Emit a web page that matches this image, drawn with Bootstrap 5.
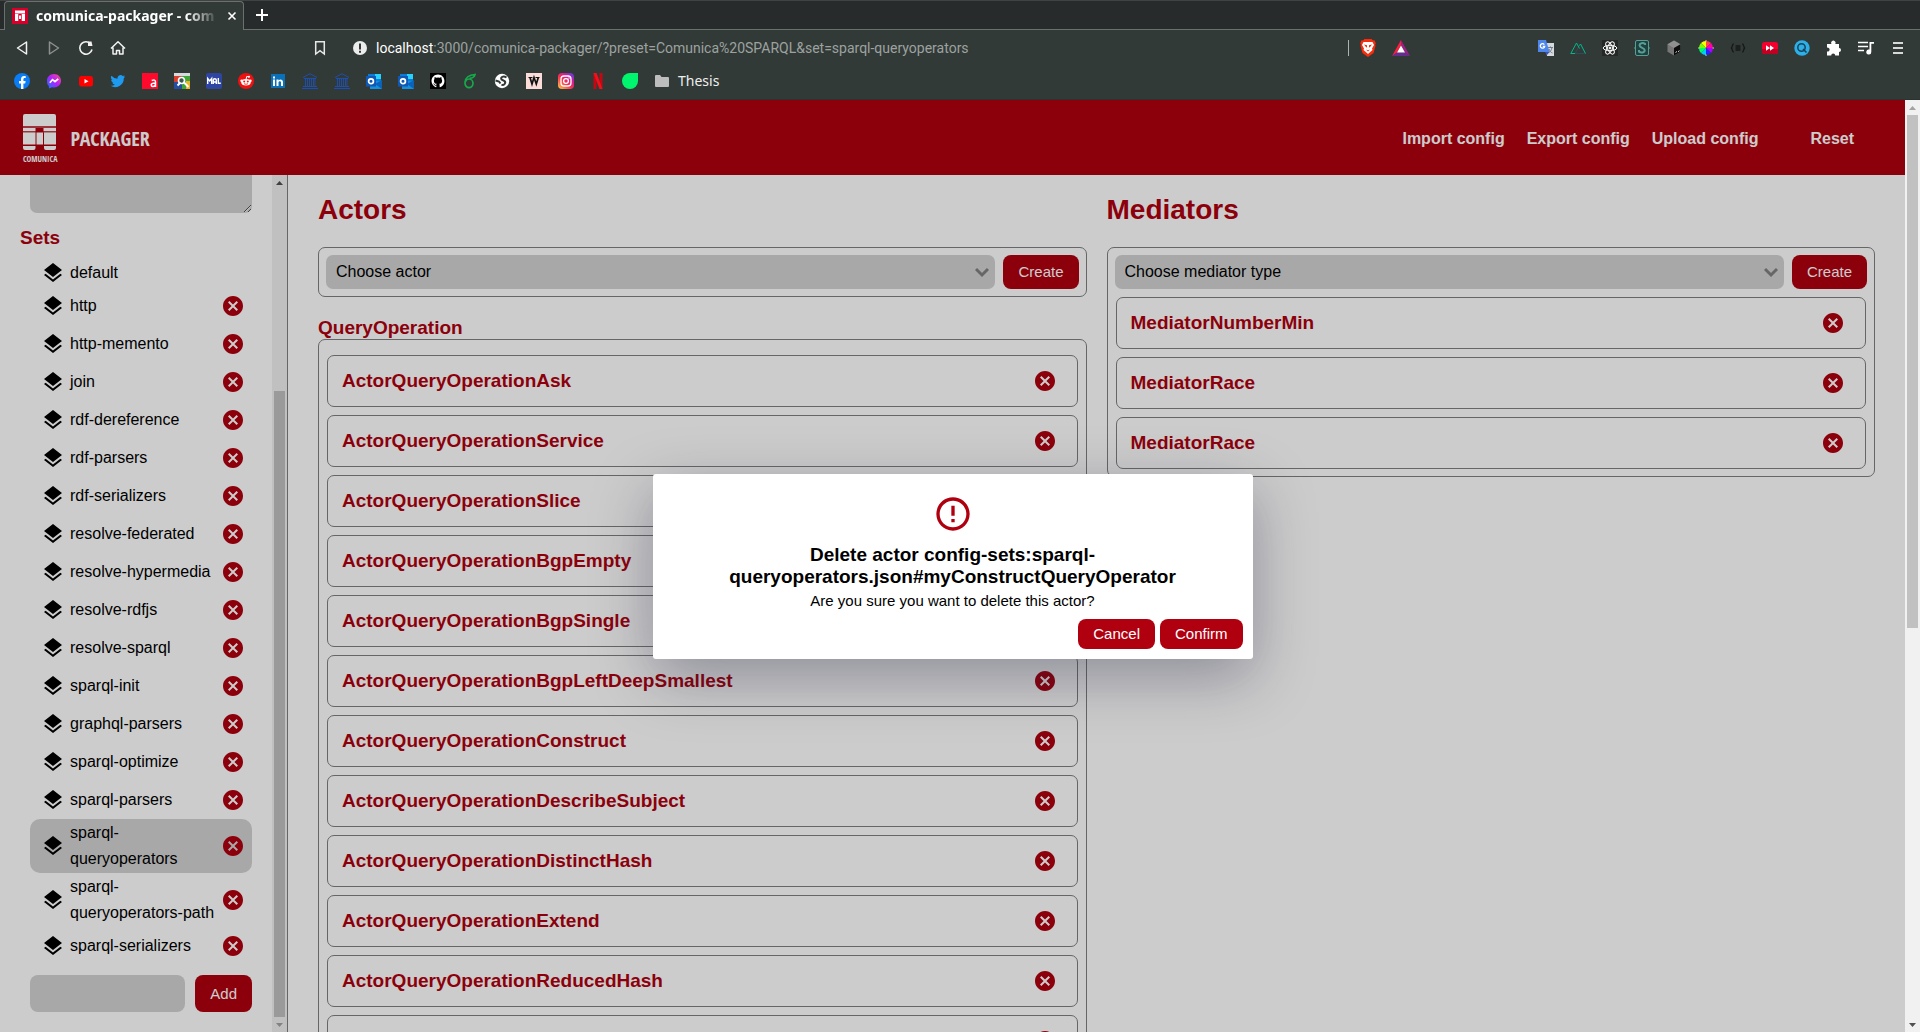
<!DOCTYPE html>
<html lang="en">
<head>
<meta charset="utf-8">
<meta name="viewport" content="width=device-width, initial-scale=1">
<title>comunica-packager - comunica</title>
<link rel="stylesheet" href="https://cdn.jsdelivr.net/npm/bootstrap@5.3.0/dist/css/bootstrap.min.css">
<style>
:root{--brand:#b0000f;--field:#d3d3d3;--line:#808080}
body{height:100vh;font-family:"Liberation Sans",Arial,sans-serif;font-size:16px;line-height:24px;color:#000;background:#fff;overflow:hidden}
svg{display:block;flex:none}
/* browser frame */
.chrome-bar{flex:none;background:#323a37;color:#eee;font-family:"Noto Sans",sans-serif;font-size:14px}
.tab-strip{height:30px;background:#272b2b;border-top:1px solid #3f4443;border-bottom:1px solid #6b6f6e;padding-left:4px}
.tab-open{width:240px;height:29px;background:#323a37;border:1px solid #6b6f6e;border-bottom:0;border-radius:4px 4px 0 0;padding:0 6px 0 7px;gap:8px;margin-bottom:-1px}
.tab-name{font-weight:700;font-size:14px;color:#fff;flex:1;white-space:nowrap;line-height:20px;-webkit-mask-image:linear-gradient(90deg,#000 82%,transparent);mask-image:linear-gradient(90deg,#000 82%,transparent)}
.plain-btn{border:0;background:none;padding:0;color:inherit;display:block;line-height:0}
.tool-row{height:36px;padding:0 14px;gap:16px}
.save-page{margin-left:170px}
.shield-group{height:16px;border-left:1px solid #aeb2b0;padding-left:11px}
.url-box{font-family:Roboto,sans-serif;font-size:14px;color:#9da2a0;line-height:20px}
.url-box b{font-weight:400;color:#fff}
.mark-row{height:34px;padding:0 14px 4px;gap:16px;border-bottom:1px solid #2b3230}
.mark-row a,.mark-row a:hover{color:#eee;text-decoration:none}
/* application */
.app-head{flex:none;height:75px;background:var(--brand);padding:2px 51px 0 23px;gap:22px}
.app-head a{color:#fff;font-weight:700;text-decoration:none}
.app-head .reset-link{padding-left:30px}
.brand-pair{gap:13px}
.brand-word{font-family:"Open Sans Condensed","Roboto Condensed",sans-serif;font-size:20px;line-height:24px;font-weight:700;color:#fff}
.logo-word{font-family:"Open Sans Condensed","Roboto Condensed",sans-serif;font-size:8px;line-height:10px;color:#fff;text-align:center}
.side-col{width:288px;border-right:1px solid var(--line)}
.side-body{padding:0 20px 20px 30px}
.brand-text{color:var(--brand);font-weight:700;font-size:19px;line-height:22px;margin:0}
.side-body .brand-text{margin:14px 0 10px -10px}
.group-name{margin-top:20px}
.notes-box{height:38px;border:0;border-radius:0 0 7px 7px;background:var(--field);width:100%;display:block;resize:vertical}
.set-item{min-height:38px;padding:1px 7px 1px 11px;gap:5px;border-radius:10px;line-height:26px}
.set-item.first-set{min-height:28px}
.set-item.chosen{background:var(--field)}
.set-item span{flex:1;min-width:0}
.kill{color:var(--brand);border:0;background:none;padding:0;line-height:0}
.add-form{gap:10px;margin-top:10px}
.new-set{height:37px;min-width:0;flex:1;border:0;border-radius:8px;background:var(--field)}
.red-btn{background:var(--brand);color:#fff;border:0;border-radius:8px;padding:0 15px;font-size:15px;line-height:18px;height:34px}
.red-btn:hover{background:#8f000c;color:#fff}
.scroll-rail{width:15px;background:#f1f1f1;flex:none}
.scroll-rail i{display:block;background:#c1c1c1;width:11px}
.side-thumb{height:73%}
.page-thumb{height:55%}
.rail-arrow{height:15px;display:flex;align-items:center;justify-content:center}
.work-area{padding:18px 30px 0;gap:20px}
.work-area h2{color:var(--brand);font-weight:700;font-size:28px;line-height:34px;margin:0 0 20px}
.frame-box{border:1px solid var(--line);border-radius:7px;padding:7px}
.stack{display:flex;flex-direction:column;gap:8px}
.stack.roomy{padding-top:15px}
.pick{height:34px;border:0;border-radius:7px;padding:0 36px 0 10px;font-size:16px;line-height:24px;color:#000;background-color:var(--field);background-position:right 6px center;background-size:14px 14px;--bs-form-select-bg-img:url("data:image/svg+xml,%3csvg xmlns='http://www.w3.org/2000/svg' viewBox='0 0 14 14'%3e%3cpath fill='none' stroke='%23808080' stroke-width='3' d='M1 4l6 6 6-6'/%3e%3c/svg%3e")}
.part-card{height:52px;border:1px solid var(--line);border-radius:7px;padding:0 20px 0 14px;margin:0 1px}
.shade{position:absolute;inset:0;background:rgba(0,0,0,.2)}
.ask-box{width:600px;background:#fff;border-radius:3px;padding:20px 10px 10px;box-shadow:0 18px 60px rgba(30,30,60,.36)}
.ask-box h3{font-size:19px;line-height:22px;font-weight:700;margin:10px 0 4px}
.ask-box p{font-size:15px;line-height:18px;margin:0 0 9px}
.ask-box .red-btn{height:30px}
.answers{gap:5px}
</style>
</head>
<body class="d-flex flex-column">
<svg width="0" height="0" class="position-absolute" aria-hidden="true">
<symbol id="layers" viewBox="0 0 24 24"><path d="M11.99 18.54l-7.37-5.73L3 14.07l9 7 9-7-1.63-1.27zM12 16l7.36-5.73L21 9l-9-7-9 7 1.63 1.27z"/></symbol>
<symbol id="cancel" viewBox="0 0 24 24"><path fill="currentColor" d="M12 2C6.47 2 2 6.47 2 12s4.47 10 10 10 10-4.47 10-10S17.53 2 12 2zm5 13.59L15.59 17 12 13.41 8.41 17 7 15.59 10.59 12 7 8.41 8.41 7 12 10.59 15.59 7 17 8.41 13.41 12z"/></symbol>
<symbol id="bank" viewBox="0 0 16 16"><g fill="none" stroke="#1d4fb0"><path d="M1 4.5L8 .7l7 3.800M2 5.500h12M1 13.500h14M0 15.500h16"/><path d="M3.500 6v7M5.500 6v7M7.500 6v7M9.500 6v7M11.500 6v7M13 6v7" stroke-width=".9"/></g></symbol>
<symbol id="outlook" viewBox="0 0 16 16"><path fill="#0a7bd8" d="M2 1h13v8H2z"/><path fill="#28d2ff" d="M9 1h6v5H9z"/><path fill="#1490df" d="M4 8h12v8H4z"/><path fill="#0a63b8" d="M9 11l7-4v9z"/><path fill="#0f59b5" d="M0 3h10v10.500H0z"/><circle cx="5" cy="8.200" r="2.400" fill="none" stroke="#fff" stroke-width="1.700"/></symbol>
</svg>

<header class="chrome-bar">
<div class="tab-strip d-flex align-items-end">
<div class="tab-open d-flex align-items-center">
<svg width="16" height="16" viewBox="0 0 16 16"><path fill="#d6002a" d="M0 0h16v16H0z"/><path fill="#fff" d="M3 2.500h10v3H3zM3 6h3.300v7H3zM9.700 6H13v7H9.700zM7 7.500h2V11H7z"/></svg>
<span class="tab-name">comunica-packager - com</span>
<button class="plain-btn" aria-label="Close tab"><svg width="10" height="10" viewBox="0 0 10 10"><path d="M1.500 1.500l7 7m0-7l-7 7" stroke="#fff" stroke-width="1.600"/></svg></button>
</div>
<button class="plain-btn ms-2 mb-2 ps-1" aria-label="New tab"><svg width="12" height="12" viewBox="0 0 12 12"><path d="M6 0v12M0 6h12" stroke="#fff" stroke-width="2"/></svg></button>
</div>
<div class="tool-row d-flex align-items-center">
<button class="plain-btn" aria-label="Back"><svg width="16" height="16" viewBox="0 0 16 16" fill="none" stroke="#f2f2f2" stroke-width="1.500" stroke-linejoin="round"><path d="M12.500 2v12L3.500 8z"/></svg></button>
<button class="plain-btn" aria-label="Forward"><svg width="16" height="16" viewBox="0 0 16 16" fill="none" stroke="#8b908e" stroke-width="1.500" stroke-linejoin="round"><path d="M3.500 2v12l9-6z"/></svg></button>
<button class="plain-btn" aria-label="Reload"><svg width="16" height="16" viewBox="0 0 16 16"><path fill="none" stroke="#f2f2f2" stroke-width="1.600" d="M10.500 2.300A6.200 6.200 0 1 0 14 9.500"/><path fill="#f2f2f2" d="M10 1.500h3.500L14.500 6H10z"/></svg></button>
<button class="plain-btn" aria-label="Home"><svg width="16" height="16" viewBox="0 0 16 16" fill="none" stroke="#f2f2f2" stroke-width="1.500" stroke-linejoin="round"><path d="M1 8.500L8 1.700l7 6.800M3 7.500V14h3.500v-3.500h3V14H13V7.500"/></svg></button>
<button class="plain-btn save-page" aria-label="Bookmark this page"><svg width="16" height="16" viewBox="0 0 16 16" fill="none" stroke="#e8e8e8" stroke-width="1.500"><path d="M3.700 1.700h8.600v12.300L8 10.700 3.700 14z"/></svg></button>
<div class="d-flex align-items-center flex-grow-1 ms-2 gap-2">
<svg width="16" height="16" viewBox="0 0 16 16"><circle cx="8" cy="8" r="7" fill="#ececec"/><path fill="#323a37" d="M7 3.500h2v6H7zM7 10.700h2v2H7z"/></svg>
<span class="url-box"><b>localhost</b>:3000/comunica-packager/?preset=Comunica%20SPARQL&amp;set=sparql-queryoperators</span>
</div>
<div class="shield-group d-flex align-items-center gap-3 me-5">
<svg width="16" height="18" viewBox="0 0 16 18"><path fill="#fb2c0c" d="M4.500 0h7l1.500 1.500 1.500-.2 1.300 3-.6 1.200.3 1.500-2 7L8 18l-5.500-4-2-7 .3-1.500L.2 4.300l1.300-3 1.500.2z"/><path fill="#fff" d="M3.500 3h9l1.500 3-2 3.500.5 1.500L8 15l-4.500-4 .5-1.500L2 6z"/><path fill="#fb2c0c" d="M4 5.500l3 .8v2.500L5.500 7.500zM12 5.500l-3 .8v2.500l1.500-1.300zM6 10.500l2 .7 2-.7-2 2z"/></svg>
<svg width="18" height="16" viewBox="0 0 18 16"><path fill="#ff1c3c" d="M9 0L0 16l5-3.500L9 5z"/><path fill="#9e1f8a" d="M9 0l9 16-5-3.500L9 5z"/><path fill="#662d91" d="M0 16h18l-5-3.500H5z"/><path fill="#fff" d="M9 5.500l4 7H5z"/></svg>
</div>
<div class="d-flex align-items-center gap-3 ps-5 ms-3">
<svg width="16" height="16" viewBox="0 0 16 16"><path fill="#d6d9dd" d="M7 3h9v13H9z"/><path fill="#4f86ec" d="M0 0h8l3.500 12H0z"/><path fill="#3558b8" d="M7 12h4.500L9 15z"/><path fill="none" stroke="#fff" stroke-width="1.300" d="M6.300 4.600A2.200 2.200 0 1 0 6.700 6.300H4.800"/><path fill="none" stroke="#6b7c8c" d="M10 7.500h5M12.500 6.500v1M14 7.500c-.5 3-2 4-3 5M11 9c.5 2 2 3.500 3.500 4"/></svg>
<svg width="16" height="16" viewBox="0 0 16 16" fill="none"><path stroke="#2f495e" d="M5 13.500l5.500-9.500 5 9.500z"/><path stroke="#00b888" d="M5 13.500H.8L6.500 3l3 5.500M9.500 5.500l1-1.500 5 9.500"/></svg>
<svg width="16" height="16" viewBox="0 0 16 16" fill="none" stroke="#fff"><path stroke="none" fill="#252827" d="M0 0h16v16H0z"/><ellipse cx="8" cy="8" rx="6.800" ry="2.700"/><ellipse cx="8" cy="8" rx="6.800" ry="2.700" transform="rotate(60 8 8)"/><ellipse cx="8" cy="8" rx="6.800" ry="2.700" transform="rotate(120 8 8)"/><circle cx="8" cy="8" r="1" fill="#fff"/></svg>
<svg width="16" height="16" viewBox="0 0 16 16" fill="none" stroke="#5a9d94"><rect x="1.500" y=".5" width="13" height="15" rx="1.500" fill="#1c4340"/><path stroke-width="2" d="M11 5V3.800C9 2.500 5.500 3 5.500 5.300c0 3 5.200 2.200 5.200 5 0 2.500-3.700 2.700-5.700 1.400V10"/><path d="M0 8h1.500m13 0H16"/></svg>
<svg width="16" height="16" viewBox="0 0 16 16"><path fill="#777" d="M8 .5l6.500 3.700v7.600L8 15.500l-6.500-3.700V4.200z"/><path fill="#aaa" d="M8 .5l6.500 3.700L8 8 1.500 4.200z" opacity=".5"/><path fill="#0c0c0c" d="M8 8l6.500-3.800v7.600L8 15.500z"/><path stroke="#ddd" d="M9.500 12.500l1.500-1m1 .2l1.500-1"/></svg>
<svg width="16" height="16" viewBox="0 0 16 16"><path fill="#ff0" d="M8 8V1a7 7 0 0 0-5 2z"/><path fill="#f44" d="M8 8V1a7 7 0 0 1 5 2z"/><path fill="#f0a" d="M8 8l5-5a7 7 0 0 1 2 5z"/><path fill="#a0f" d="M8 8h7a7 7 0 0 1-2 5z"/><path fill="#22f" d="M8 8l5 5a7 7 0 0 1-5 2z"/><path fill="#0cf" d="M8 8v7a7 7 0 0 1-5-2z"/><path fill="#0f6" d="M8 8l-5 5a7 7 0 0 1-2-5z"/><path fill="#7f0" d="M8 8H1a7 7 0 0 1 2-5z"/><path stroke="#ccc" d="M8 0v1.500M8 14.500V16M0 8h1.500m13 0H16"/></svg>
<svg width="16" height="16" viewBox="0 0 16 16" fill="none" stroke="#151817" stroke-width="1.300"><path d="M3.800 4C1.500 4 3.200 7.500 1 8c2.200.5.500 4 2.800 4M12.200 4c2.300 0 .6 3.500 2.800 4-2.200.5-.5 4-2.800 4M5.500 6h5M5.500 8h5M5.500 10h5"/></svg>
<svg width="16" height="16" viewBox="0 0 16 16"><rect y="2" width="16" height="12" rx="2.500" fill="#f5002e"/><path fill="#c00022" d="M0 9h16v3a2 2 0 0 1-2 2H2a2 2 0 0 1-2-2z"/><path fill="#fff" d="M4 5.200L8 8l-4 2.800zM8 5.200L12 8l-4 2.800z"/></svg>
<svg width="16" height="16" viewBox="0 0 16 16"><circle cx="8" cy="8" r="7.700" fill="#2bb1e8"/><circle cx="7.500" cy="7.500" r="3.700" fill="none" stroke="#17415a" stroke-width="1.500"/><path stroke="#17415a" stroke-width="1.600" d="M9 9l3.500 3.500"/></svg>
<svg width="16" height="16" viewBox="0 0 16 16"><path fill="#fff" d="M1 4h4.500a2.200 2.200 0 1 1 3.700 0H13v4a2 2 0 1 1 0 4v3.500H9.200a2 2 0 1 0-4 0H1V11.500a2 2 0 1 0 0-3.800z"/></svg>
<svg width="16" height="16" viewBox="0 0 16 16"><path stroke="#fff" stroke-width="1.700" d="M0 2.500h10M0 6.500h10M0 10.500h6"/><path fill="#fff" d="M11.500 2H16v1.800h-2.700V12a2.500 2.500 0 1 1-1.800-2.400z"/></svg>
<svg width="16" height="16" viewBox="0 0 16 16"><path stroke="#d6d9d8" stroke-width="2" d="M3 3h10M3 8h10M3 13h10"/></svg>
</div>
</div>
<nav class="mark-row d-flex align-items-center" aria-label="Bookmarks">
<svg width="16" height="16" viewBox="0 0 16 16"><circle cx="8" cy="8" r="8" fill="#0a7cf5"/><path fill="#fff" d="M7 16v-5.500H5V8h2V6.300C7 4.200 8.200 3 10.200 3l1.500.1v2h-1C9.700 5.100 9.400 5.700 9.400 6.400V8h2.200l-.4 2.500H9.400V16z"/></svg>
<svg width="16" height="16" viewBox="0 0 16 16"><defs><linearGradient id="mg" x1="0" y1="1" x2="1" y2="0"><stop offset="0" stop-color="#0a7cff"/><stop offset=".5" stop-color="#b020ff"/><stop offset="1" stop-color="#ff4c80"/></linearGradient></defs><path fill="url(#mg)" d="M8 1c4 0 7 2.900 7 6.700s-3 6.700-7 6.700l-2-.2L3 15.500l-.2-2.400A6.600 6.600 0 0 1 1 7.700C1 3.900 4 1 8 1z"/><path fill="none" stroke="#fff" stroke-width="1.700" d="M3.800 9.700l2.700-3 2.500 2 3.200-2.800"/></svg>
<svg width="16" height="16" viewBox="0 0 16 16"><rect x="1" y="3" width="14" height="10.500" rx="2.500" fill="#f00"/><path fill="#fff" d="M6.500 6l4 2.200-4 2.300z"/></svg>
<svg width="16" height="16" viewBox="0 0 24 24"><path fill="#1d9bf0" d="M22.600 5.300a9 9 0 0 1-2.600.7 4.500 4.500 0 0 0 2-2.500c-.9.500-1.800.9-2.900 1.100a4.500 4.500 0 0 0-7.700 4.100A13 13 0 0 1 2.200 4.100a4.500 4.500 0 0 0 1.400 6.100 4.600 4.600 0 0 1-2-.6 4.500 4.500 0 0 0 3.600 4.500 4.600 4.600 0 0 1-2 .1 4.500 4.500 0 0 0 4.200 3.100A9 9 0 0 1 .9 19.200a13 13 0 0 0 19.800-11.400c.7-.7 1.500-1.500 1.900-2.500z"/></svg>
<svg width="16" height="16" viewBox="0 0 16 16"><path fill="#ff0a2d" d="M0 0h16v16H0z"/><path fill="none" stroke="#fff" stroke-width="1.500" d="M9.700 7.500q3.800-1.500 3.800 1.500v5M13.500 10q-4.300 0-4.300 2 0 1.500 1.600 1.500 2.700 0 2.700-2.500"/></svg>
<svg width="16" height="16" viewBox="0 0 16 16"><path fill="#d8402c" d="M0 3h8v6H0z"/><path fill="#3fa535" d="M8 3h8v13H8z"/><path fill="#244f9e" d="M0 9h8v7H0z"/><path fill="#d7dadd" d="M0 0h16v3H0z"/><path fill="#e9b52b" d="M12 8h4v8h-4z"/><circle cx="7.500" cy="7.500" r="3" fill="#3a5a50" stroke="#fff" stroke-width="1.600"/><path stroke="#fff" stroke-width="2" d="M9.500 9l5 5M3.500 12.500l3-3"/></svg>
<svg width="16" height="16" viewBox="0 0 16 16"><rect width="16" height="16" rx="2" fill="#2e45a3"/><path fill="none" stroke="#fff" stroke-width="1.400" d="M1.700 11V5.500l2 2.500 2-2.500V11M7.300 11V7q0-1.300 1.500-1.300T10.300 7v4M7.300 9h3M12.300 5v5.300h2.500"/></svg>
<svg width="16" height="16" viewBox="0 0 16 16"><circle cx="8" cy="8" r="8" fill="#f01010"/><ellipse cx="8" cy="9.300" rx="4.700" ry="3.300" fill="#fff"/><circle cx="3.600" cy="7.800" r="1.300" fill="#fff"/><circle cx="12.400" cy="7.800" r="1.300" fill="#fff"/><circle cx="11" cy="3.800" r="1" fill="#fff"/><path fill="none" stroke="#fff" d="M8 6.500l.7-3 2.300.4"/><circle cx="6.200" cy="8.500" r="1" fill="#f01010"/><circle cx="9.800" cy="8.500" r="1" fill="#f01010"/><path fill="none" stroke="#f01010" stroke-width=".8" d="M6 10.700q2 1.200 4 0"/></svg>
<svg width="16" height="16" viewBox="0 0 16 16"><path fill="#0a70b8" d="M1 1h14v14H1z"/><path fill="#fff" d="M3 6.500h2V13H3zM3 3.500h2v2H3zM6.500 6.500h2v1C10 5.700 13 6.200 13 9v4h-2V9.500c0-1.700-2.500-1.700-2.500 0V13h-2z"/></svg>
<svg width="16" height="16"><use href="#bank"/></svg>
<svg width="16" height="16"><use href="#bank"/></svg>
<svg width="16" height="16"><use href="#outlook"/></svg>
<svg width="16" height="16"><use href="#outlook"/></svg>
<svg width="16" height="16" viewBox="0 0 16 16"><path d="M0 0h16v16H0z"/><g transform="translate(1.500 1.500) scale(.81)"><path fill="#fff" d="M8 0C3.580 0 0 3.580 0 8c0 3.540 2.290 6.530 5.470 7.590.4.070.55-.17.55-.38v-1.490c-2.010.37-2.530-.49-2.690-.94-.09-.23-.48-.94-.82-1.130-.28-.15-.68-.52-.01-.53.63-.01 1.080.58 1.230.82.72 1.210 1.870.87 2.330.66.070-.52.28-.87.51-1.070-1.780-.2-3.640-.89-3.640-3.950 0-.87.31-1.590.82-2.150-.08-.2-.36-1.020.08-2.120 0 0 .67-.21 2.200.82a7.400 7.400 0 0 1 4 0c1.530-1.040 2.200-.82 2.200-.82.44 1.100.16 1.920.08 2.120.51.56.82 1.270.82 2.150 0 3.070-1.870 3.750-3.650 3.950.29.25.54.73.54 1.480v2.200c0 .21.15.46.55.38A8 8 0 0 0 16 8c0-4.420-3.580-8-8-8z"/></g></svg>
<svg width="16" height="16" viewBox="0 0 16 16"><g fill="none" stroke="#17a84b" stroke-width="1.700"><ellipse cx="7" cy="10.300" rx="4" ry="4.300"/><path d="M3.200 9C3.500 5 6 2 13 1.500 12.500 4 10 5.500 7.500 5"/></g></svg>
<svg width="16" height="16" viewBox="0 0 16 16"><circle cx="8" cy="8" r="7.200" fill="#fff"/><path fill="none" stroke="#323a37" stroke-width="2" d="M12.500 4.500C9.500 2.500 6 4 7.500 6.500l3 1.500c2 2-1 5-3 3.500M1.500 7.500l3.500 1 1.500 2"/></svg>
<svg width="16" height="16" viewBox="0 0 16 16"><path fill="#fbdcd8" d="M0 0h16v16H0z"/><path fill="none" stroke="#111" d="M2.500 4.500h4M9.500 4.500h4"/><path fill="none" stroke="#111" stroke-width="1.700" d="M4 4.500l2 6.500 2-6.500 2.300 6.500 2-6.500"/></svg>
<svg width="16" height="16" viewBox="0 0 16 16"><defs><linearGradient id="ig" x1="0" y1="1" x2=".9" y2="0"><stop offset="0" stop-color="#ffd14a"/><stop offset=".45" stop-color="#f9304f"/><stop offset=".75" stop-color="#c61fa0"/><stop offset="1" stop-color="#5a3fe0"/></linearGradient></defs><rect width="16" height="16" rx="4" fill="url(#ig)"/><g fill="none" stroke="#fff" stroke-width="1.300"><rect x="3" y="3" width="10" height="10" rx="3"/><circle cx="8" cy="8" r="2.400"/></g><circle cx="11" cy="5" r=".7" fill="#fff"/></svg>
<svg width="16" height="16" viewBox="0 0 16 16"><path fill="#c40812" d="M3.500 0h3v16h-3zM9.500 0h3v16h-3z"/><path fill="#f3101c" d="M3.500 0h3l6 16h-3z"/></svg>
<svg width="16" height="16" viewBox="0 0 16 16"><path fill="#00f56e" d="M16 0v8a8 8 0 1 1-8-8z"/></svg>
<a href="#" class="d-flex align-items-center gap-2"><svg width="16" height="16" viewBox="0 0 16 16"><path fill="#bdbdbd" d="M1 3q0-1 1-1h4l1.500 2H14q1 0 1 1v8q0 1-1 1H2q-1 0-1-1z"/></svg>Thesis</a>
</nav>
</header>

<div class="d-flex flex-grow-1 overflow-hidden">
<div class="position-relative d-flex flex-column flex-grow-1 overflow-hidden">
<header class="app-head d-flex align-items-center">
<div class="brand-pair d-flex align-items-center me-auto">
<div>
<svg width="33" height="36" viewBox="0 0 33 36"><path fill="#fff" d="M2 0h29q2 0 2 2v10H0V2Q0 0 2 0zM0 14h12.500v3H0zM20.500 14H33v3H20.500zM0 18.500h12.500V30.500H0zM13.500 18.500h6.500V30.500h-6.500zM21 18.500h12v12H21zM0 32h12.500v2q0 2-2 2H2q-2 0-2-2zM21 32h12v2q0 2-2 2h-8q-2 0-2-2z"/><path stroke="#fff" stroke-opacity=".5" d="M0 13h33M0 18h12.500M20.500 18H33"/></svg>
<div class="logo-word mt-1">COMUNICA</div>
</div>
<span class="brand-word">PACKAGER</span>
</div>
<a href="#">Import config</a><a href="#">Export config</a><a href="#">Upload config</a><a href="#" class="reset-link">Reset</a>
</header>

<div class="d-flex flex-grow-1 overflow-hidden">
<aside class="side-col d-flex flex-shrink-0">
<div class="side-body flex-grow-1 overflow-hidden">
<textarea class="notes-box" aria-label="Description"></textarea>
<h3 class="brand-text">Sets</h3>
<div class="set-item first-set d-flex align-items-center"><svg width="24" height="24"><use href="#layers"/></svg><span>default</span></div>
<div class="set-item d-flex align-items-center"><svg width="24" height="24"><use href="#layers"/></svg><span>http</span><button class="kill" aria-label="Remove http"><svg width="24" height="24"><use href="#cancel"/></svg></button></div>
<div class="set-item d-flex align-items-center"><svg width="24" height="24"><use href="#layers"/></svg><span>http-memento</span><button class="kill" aria-label="Remove http-memento"><svg width="24" height="24"><use href="#cancel"/></svg></button></div>
<div class="set-item d-flex align-items-center"><svg width="24" height="24"><use href="#layers"/></svg><span>join</span><button class="kill" aria-label="Remove join"><svg width="24" height="24"><use href="#cancel"/></svg></button></div>
<div class="set-item d-flex align-items-center"><svg width="24" height="24"><use href="#layers"/></svg><span>rdf-dereference</span><button class="kill" aria-label="Remove rdf-dereference"><svg width="24" height="24"><use href="#cancel"/></svg></button></div>
<div class="set-item d-flex align-items-center"><svg width="24" height="24"><use href="#layers"/></svg><span>rdf-parsers</span><button class="kill" aria-label="Remove rdf-parsers"><svg width="24" height="24"><use href="#cancel"/></svg></button></div>
<div class="set-item d-flex align-items-center"><svg width="24" height="24"><use href="#layers"/></svg><span>rdf-serializers</span><button class="kill" aria-label="Remove rdf-serializers"><svg width="24" height="24"><use href="#cancel"/></svg></button></div>
<div class="set-item d-flex align-items-center"><svg width="24" height="24"><use href="#layers"/></svg><span>resolve-federated</span><button class="kill" aria-label="Remove resolve-federated"><svg width="24" height="24"><use href="#cancel"/></svg></button></div>
<div class="set-item d-flex align-items-center"><svg width="24" height="24"><use href="#layers"/></svg><span>resolve-hypermedia</span><button class="kill" aria-label="Remove resolve-hypermedia"><svg width="24" height="24"><use href="#cancel"/></svg></button></div>
<div class="set-item d-flex align-items-center"><svg width="24" height="24"><use href="#layers"/></svg><span>resolve-rdfjs</span><button class="kill" aria-label="Remove resolve-rdfjs"><svg width="24" height="24"><use href="#cancel"/></svg></button></div>
<div class="set-item d-flex align-items-center"><svg width="24" height="24"><use href="#layers"/></svg><span>resolve-sparql</span><button class="kill" aria-label="Remove resolve-sparql"><svg width="24" height="24"><use href="#cancel"/></svg></button></div>
<div class="set-item d-flex align-items-center"><svg width="24" height="24"><use href="#layers"/></svg><span>sparql-init</span><button class="kill" aria-label="Remove sparql-init"><svg width="24" height="24"><use href="#cancel"/></svg></button></div>
<div class="set-item d-flex align-items-center"><svg width="24" height="24"><use href="#layers"/></svg><span>graphql-parsers</span><button class="kill" aria-label="Remove graphql-parsers"><svg width="24" height="24"><use href="#cancel"/></svg></button></div>
<div class="set-item d-flex align-items-center"><svg width="24" height="24"><use href="#layers"/></svg><span>sparql-optimize</span><button class="kill" aria-label="Remove sparql-optimize"><svg width="24" height="24"><use href="#cancel"/></svg></button></div>
<div class="set-item d-flex align-items-center"><svg width="24" height="24"><use href="#layers"/></svg><span>sparql-parsers</span><button class="kill" aria-label="Remove sparql-parsers"><svg width="24" height="24"><use href="#cancel"/></svg></button></div>
<div class="set-item chosen d-flex align-items-center"><svg width="24" height="24"><use href="#layers"/></svg><span>sparql-queryoperators</span><button class="kill" aria-label="Remove sparql-queryoperators"><svg width="24" height="24"><use href="#cancel"/></svg></button></div>
<div class="set-item d-flex align-items-center"><svg width="24" height="24"><use href="#layers"/></svg><span>sparql-queryoperators-path</span><button class="kill" aria-label="Remove sparql-queryoperators-path"><svg width="24" height="24"><use href="#cancel"/></svg></button></div>
<div class="set-item d-flex align-items-center"><svg width="24" height="24"><use href="#layers"/></svg><span>sparql-serializers</span><button class="kill" aria-label="Remove sparql-serializers"><svg width="24" height="24"><use href="#cancel"/></svg></button></div>
<form class="add-form d-flex"><input class="new-set" type="text" aria-label="New set name"><button type="button" class="btn red-btn h-auto">Add</button></form>
</div>
<div class="scroll-rail d-flex flex-column align-items-center" aria-hidden="true">
<div class="rail-arrow"><svg width="7" height="4" viewBox="0 0 7 4"><path fill="#505050" d="M0 4l3.500-4L7 4z"/></svg></div>
<i class="side-thumb mt-auto"></i>
<div class="rail-arrow"><svg width="7" height="4" viewBox="0 0 7 4"><path fill="#a3a3a3" d="M0 0l3.500 4L7 0z"/></svg></div>
</div>
</aside>

<main class="work-area d-flex flex-grow-1">
<section class="flex-fill w-50">
<h2>Actors</h2>
<div class="frame-box d-flex gap-2"><select class="form-select pick" aria-label="Choose actor"><option>Choose actor</option></select><button class="btn red-btn">Create</button></div>
<h3 class="brand-text group-name pt-0">QueryOperation</h3>
<div class="frame-box stack roomy">
<div class="part-card d-flex align-items-center justify-content-between"><h3 class="brand-text">ActorQueryOperationAsk</h3><button class="kill" aria-label="Delete"><svg width="24" height="24"><use href="#cancel"/></svg></button></div>
<div class="part-card d-flex align-items-center justify-content-between"><h3 class="brand-text">ActorQueryOperationService</h3><button class="kill" aria-label="Delete"><svg width="24" height="24"><use href="#cancel"/></svg></button></div>
<div class="part-card d-flex align-items-center justify-content-between"><h3 class="brand-text">ActorQueryOperationSlice</h3><button class="kill" aria-label="Delete"><svg width="24" height="24"><use href="#cancel"/></svg></button></div>
<div class="part-card d-flex align-items-center justify-content-between"><h3 class="brand-text">ActorQueryOperationBgpEmpty</h3><button class="kill" aria-label="Delete"><svg width="24" height="24"><use href="#cancel"/></svg></button></div>
<div class="part-card d-flex align-items-center justify-content-between"><h3 class="brand-text">ActorQueryOperationBgpSingle</h3><button class="kill" aria-label="Delete"><svg width="24" height="24"><use href="#cancel"/></svg></button></div>
<div class="part-card d-flex align-items-center justify-content-between"><h3 class="brand-text">ActorQueryOperationBgpLeftDeepSmallest</h3><button class="kill" aria-label="Delete"><svg width="24" height="24"><use href="#cancel"/></svg></button></div>
<div class="part-card d-flex align-items-center justify-content-between"><h3 class="brand-text">ActorQueryOperationConstruct</h3><button class="kill" aria-label="Delete"><svg width="24" height="24"><use href="#cancel"/></svg></button></div>
<div class="part-card d-flex align-items-center justify-content-between"><h3 class="brand-text">ActorQueryOperationDescribeSubject</h3><button class="kill" aria-label="Delete"><svg width="24" height="24"><use href="#cancel"/></svg></button></div>
<div class="part-card d-flex align-items-center justify-content-between"><h3 class="brand-text">ActorQueryOperationDistinctHash</h3><button class="kill" aria-label="Delete"><svg width="24" height="24"><use href="#cancel"/></svg></button></div>
<div class="part-card d-flex align-items-center justify-content-between"><h3 class="brand-text">ActorQueryOperationExtend</h3><button class="kill" aria-label="Delete"><svg width="24" height="24"><use href="#cancel"/></svg></button></div>
<div class="part-card d-flex align-items-center justify-content-between"><h3 class="brand-text">ActorQueryOperationReducedHash</h3><button class="kill" aria-label="Delete"><svg width="24" height="24"><use href="#cancel"/></svg></button></div>
<div class="part-card d-flex align-items-center justify-content-end"><button class="kill" aria-label="Delete"><svg width="24" height="24"><use href="#cancel"/></svg></button></div>
</div>
</section>
<section class="flex-fill w-50">
<h2>Mediators</h2>
<div class="frame-box stack">
<div class="d-flex gap-2"><select class="form-select pick" aria-label="Choose mediator type"><option>Choose mediator type</option></select><button class="btn red-btn">Create</button></div>
<div class="part-card d-flex align-items-center justify-content-between"><h3 class="brand-text">MediatorNumberMin</h3><button class="kill" aria-label="Delete"><svg width="24" height="24"><use href="#cancel"/></svg></button></div>
<div class="part-card d-flex align-items-center justify-content-between"><h3 class="brand-text">MediatorRace</h3><button class="kill" aria-label="Delete"><svg width="24" height="24"><use href="#cancel"/></svg></button></div>
<div class="part-card d-flex align-items-center justify-content-between"><h3 class="brand-text">MediatorRace</h3><button class="kill" aria-label="Delete"><svg width="24" height="24"><use href="#cancel"/></svg></button></div>
</div>
</section>
</main>
</div>

<div class="shade d-flex align-items-center justify-content-center">
<div class="ask-box text-center" role="dialog" aria-labelledby="ask-title">
<svg class="mx-auto" width="40" height="40" viewBox="0 0 24 24"><path fill="#b0000f" d="M11 15h2v2h-2zm0-8h2v6h-2zm.99-5C6.470 2 2 6.480 2 12s4.470 10 9.990 10C17.520 22 22 17.520 22 12S17.520 2 11.990 2zM12 20c-4.420 0-8-3.580-8-8s3.580-8 8-8 8 3.580 8 8-3.580 8-8 8z"/></svg>
<h3 id="ask-title">Delete actor config-sets:sparql-queryoperators.json#myConstructQueryOperator</h3>
<p>Are you sure you want to delete this actor?</p>
<div class="answers d-flex justify-content-end"><button class="btn red-btn">Cancel</button><button class="btn red-btn">Confirm</button></div>
</div>
</div>
</div>
<div class="scroll-rail d-flex flex-column align-items-center" aria-hidden="true">
<div class="rail-arrow"><svg width="7" height="4" viewBox="0 0 7 4"><path fill="#a3a3a3" d="M0 4l3.500-4L7 4z"/></svg></div>
<i class="page-thumb"></i>
<div class="rail-arrow mt-auto"><svg width="7" height="4" viewBox="0 0 7 4"><path fill="#505050" d="M0 0l3.500 4L7 0z"/></svg></div>
</div>
</div>
<script src="https://cdn.jsdelivr.net/npm/bootstrap@5.3.0/dist/js/bootstrap.bundle.min.js"></script>
</body>
</html>
